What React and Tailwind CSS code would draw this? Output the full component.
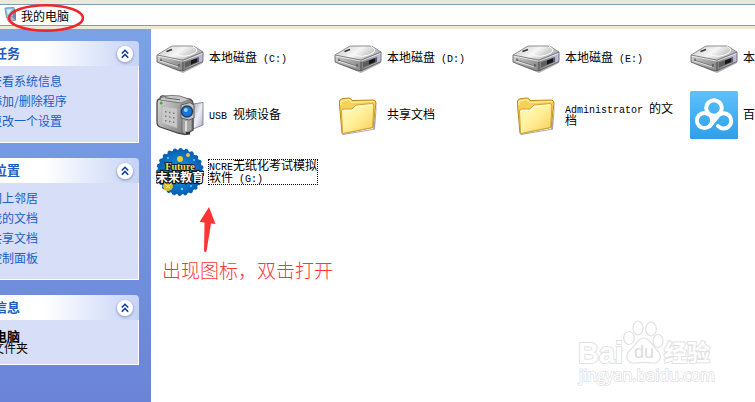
import React from "react";

const DriveIcon = () => (
    <svg className="w-12 h-12 shrink-0" viewBox="0 0 48 48" aria-hidden="true">
        <defs>
            <linearGradient id="driveTop" x1="0" y1="0" x2="1" y2="0.4">
                <stop offset="0" stopColor="#c4c4c4" />
                <stop offset="0.55" stopColor="#f6f6f6" />
                <stop offset="1" stopColor="#b0b0b0" />
            </linearGradient>
            <linearGradient id="driveFront" x1="0" y1="0" x2="1" y2="0.5">
                <stop offset="0" stopColor="#cfcfcf" />
                <stop offset="1" stopColor="#8e8e8e" />
            </linearGradient>
            <linearGradient id="driveSide" x1="0" y1="0" x2="1" y2="0">
                <stop offset="0" stopColor="#7c7c7c" />
                <stop offset="1" stopColor="#c0c0e2" />
            </linearGradient>
        </defs>
        <path d="M2 29 L27 39 L47 29 V27 L27 35 Z" fill="#000" opacity="0.3" />
        <path d="M1 21 L27 26 V36.8 L23 36.5 L1 28 Z" fill="url(#driveFront)" stroke="#555" strokeWidth="0.8" />
        <path d="M27 26 L47 18 V27.5 L27 36.8 Z" fill="url(#driveSide)" stroke="#555" strokeWidth="0.8" />
        <path d="M1 21 L15 12.5 Q16 12 18 12 H36 Q38 12 40 13.5 L47 18 L27 26 Z" fill="url(#driveTop)" stroke="#777" strokeWidth="0.8" />
        <path d="M1.5 22 L27 27.2 L46.5 19.5" fill="none" stroke="#f2f2f2" strokeWidth="0.8" />
        <path d="M19 20 Q28 25 39 19 Q43 15 37 12.5" fill="none" stroke="#fff" strokeWidth="1" />
        <path d="M10.5 17.5 l5.5 -2" stroke="#333" strokeWidth="1.4" />
        <path d="M4 26 L24 32.5" stroke="#777" strokeWidth="1" />
        <path d="M4 27 L24 33.5" stroke="#eee" strokeWidth="0.8" />
        <path d="M5 24.5 v2.5 M23 30 v3.5" stroke="#444" strokeWidth="1" />
        <path d="M29 28.5 L43 23 V28 L29 33.5 Z" fill="#5c5c5c" />
        <path d="M35 26.5 L41 24.2 V28 L35 30.5 Z" fill="#171717" />
    </svg>
);

const CameraIcon = () => (
    <svg className="w-12 h-12 shrink-0" viewBox="0 0 48 48" aria-hidden="true">
        <defs>
            <linearGradient id="camBody" x1="0" y1="0" x2="1" y2="0.5">
                <stop offset="0" stopColor="#dadada" />
                <stop offset="1" stopColor="#7d7d7d" />
            </linearGradient>
            <linearGradient id="camScreen" x1="0" y1="0" x2="1" y2="1">
                <stop offset="0" stopColor="#a5a5a5" />
                <stop offset="0.5" stopColor="#efeffa" />
                <stop offset="1" stopColor="#a9a9d0" />
            </linearGradient>
        </defs>
        <path d="M37 13 L47 11.5 V34 L37 38 Z" fill="url(#camScreen)" stroke="#777" strokeWidth="0.8" />
        <path d="M4 8 Q4 4 8 5 L33 8 Q37 9 37 13 V39 L29 43.5 L22 42 L4 36 Q1 35 1 31 V12 Q1 8 4 8 Z" fill="url(#camBody)" stroke="#4a4a4a" strokeWidth="1.3" />
        <path d="M5 6.5 Q14 3 24 5 L34 8.5 L25 12 L4 9 Z" fill="#c8c8c8" stroke="#666" strokeWidth="0.8" />
        <path d="M9 6.8 L24 8.8" stroke="#555" strokeWidth="0.9" />
        <path d="M6 15 L21 17.5 V37 L6 32 Z" fill="#c9c9c9" stroke="#b5b5b5" strokeWidth="0.7" />
        <path d="M9 20h1.5v1.5H9zM13 20.7h1.5v1.5H13zM17 21.4h1.5v1.5H17zM9 24.5h1.5V26H9zM13 25.2h1.5v1.5H13zM17 26h1.5v1.5H17zM9 29h1.5v1.5H9zM13 29.8h1.5v1.5H13zM17 30.6h1.5v1.5H17z" fill="#7d7d7d" />
        <path d="M26 27 H36 V39 L29 43 L26 41 Z" fill="#a5a5a5" stroke="#666" strokeWidth="0.8" />
        <path d="M30 30 V40" stroke="#eee" strokeWidth="1.5" />
        <path d="M25 14 L34 11.5 L38 14 V27 L33 29 L25 27 Z" fill="#c5c5c5" stroke="#555" strokeWidth="0.9" />
        <circle cx="31" cy="20.5" r="6.2" fill="#263a5c" />
        <circle cx="31" cy="20.5" r="4.8" fill="#1676e0" />
        <circle cx="29.8" cy="19" r="2" fill="#8fd0ff" />
        <circle cx="5.2" cy="12" r="1.5" fill="#3fae36" />
        <path d="M30 41h4v2.5l-4 .5z" fill="#333" />
    </svg>
);

const FolderIcon = () => (
    <svg className="w-12 h-12 shrink-0" viewBox="0 0 48 48" aria-hidden="true">
        <defs>
            <linearGradient id="folderFront" x1="0" y1="0" x2="1" y2="1">
                <stop offset="0" stopColor="#fffbc0" />
                <stop offset="0.5" stopColor="#ffef98" />
                <stop offset="1" stopColor="#f8cd50" />
            </linearGradient>
        </defs>
        <path d="M8 43 L39 38 L43 12 L41 38.5 L9 44 Z" fill="#000" opacity="0.35" />
        <path d="M5.5 14 V10 Q6 8 9 7.5 L15 7 Q17 7 18 9.5 L39 9 Q42 9 42 12 L39 36.5 L8 42.5 Z" fill="#f8cf58" stroke="#bd8b1c" strokeWidth="1" />
        <path d="M7 14 V10.5 L15 8.5 L17.5 11.5 L40 10.5" fill="none" stroke="#fff0a4" strokeWidth="1.2" />
        <path d="M7.5 20 Q7.5 18 10 18 H18 L22 14 L38 12.5 Q40 12.5 39.8 15 L38.7 36.5 L8.5 42.5 Z" fill="url(#folderFront)" stroke="#d3a238" strokeWidth="1" />
        <path d="M9 21 Q9 19.5 11 19.5 H19 L23 15.5 L38 14" fill="none" stroke="#fffde0" strokeWidth="1" />
    </svg>
);

const CloudDiskIcon = () => (
    <svg className="w-12 h-12 shrink-0" viewBox="0 0 48 48" aria-hidden="true">
        <defs>
            <linearGradient id="cloudBg" x1="0" y1="0" x2="0" y2="1">
                <stop offset="0" stopColor="#5fc0fb" />
                <stop offset="1" stopColor="#2f9fe9" />
            </linearGradient>
        </defs>
        <rect width="48" height="48" rx="1.5" fill="url(#cloudBg)" />
        <g fill="none" stroke="#fff" strokeWidth="4" strokeLinecap="round">
            <circle cx="24" cy="17" r="7.8" />
            <circle cx="14.5" cy="29.5" r="7.6" />
            <path d="M20 34.8 L28.4 24.4 A7.6 7.6 0 1 1 28 35" />
        </g>
    </svg>
);

const FutureIcon = () => (
    <svg className="w-12 h-12 shrink-0" viewBox="0 0 48 48" aria-hidden="true">
        <defs>
            <radialGradient id="badgeBg">
                <stop offset="0" stopColor="#159de8" />
                <stop offset="1" stopColor="#0a61b5" />
            </radialGradient>
        </defs>
        <circle cx="24" cy="24" r="22.5" fill="url(#badgeBg)" />
        <circle cx="24" cy="24" r="22" fill="none" stroke="#0b62b4" strokeWidth="4" strokeDasharray="0.1 5.66" strokeLinecap="round" />
        <circle cx="32" cy="7" r="2" fill="#e2c83b" />
        <circle cx="24" cy="11" r="3" fill="#e9cf35" />
        <circle cx="12" cy="38" r="5" fill="#d7bd2b" />
        <path d="M9 36l5 4M10 40l5-4" stroke="#f8eb86" strokeWidth="1" />
        <g fill="#68c9ff">
            <circle cx="12" cy="10" r="1" />
            <circle cx="38" cy="12" r="1" />
            <circle cx="26" cy="41" r="1.2" />
            <circle cx="35" cy="38" r="1" />
        </g>
        <text x="24" y="22" textAnchor="middle" fontFamily="Liberation Serif, serif" fontSize="10" fontWeight="700" fill="#f7e136" stroke="#10233d" strokeWidth="2" paintOrder="stroke">Future</text>
        <text x="24" y="34" textAnchor="middle" fontFamily="Noto Sans CJK SC, sans-serif" fontSize="12" fontWeight="700" fill="#fff" stroke="#111" strokeWidth="2.2" paintOrder="stroke">未来教育</text>
    </svg>
);

const ComputerIcon = () => (
    <svg className="w-4 h-4 shrink-0" viewBox="0 0 16 16" aria-hidden="true">
        <path d="M1 1 L10 0.5 L11 9 L2.5 11 Z" fill="#7fc5ee" stroke="#8795b4" strokeWidth="1" />
        <path d="M2.5 2.5 L8 2 L4 8 Z" fill="#d3f0ff" />
        <path d="M10 2 L12 3 V13 L9 14 V9 Z" fill="#7184ba" />
        <path d="M3 12 L9 10.5 L12 13 L5 15 Z" fill="#b8bdd2" stroke="#7a80a0" strokeWidth="0.7" />
    </svg>
);

const Panel = ({ title, children }) => (
    <section className="-ml-12 mr-3">
        <div className="h-[25px] pl-4 pr-1.5 flex items-center justify-between rounded-tr-sm bg-linear-to-r from-white from-50% to-[#c6d3f7]">
            <h2 className="text-[13px] leading-3 pb-0.5 font-bold text-[#215dc6]">{title}</h2>
            <button type="button" aria-label={title} className="w-4 h-4 flex items-center justify-center rounded-full bg-white shadow-[0_1px_2px_1px_#a4afcf]">
                <svg className="w-4 h-4" viewBox="0 0 16 16" fill="none" stroke="#0f3c9c" strokeWidth="1.6">
                    <path d="M4.8 7.5 L8 4.3 L11.2 7.5 M4.8 11.7 L8 8.5 L11.2 11.7" />
                </svg>
            </button>
        </div>
        <div className="bg-[#d6dff7] border-r border-b border-white">{children}</div>
    </section>
);

const LinkList = ({ items }) => (
    <ul className="pt-[5px] pb-[11px] pl-[38px]">
        {items.map((item) => (
            <li key={item} className="h-5 flex items-center">
                <a href="#" className="text-[#215dc6] hover:underline">{item}</a>
            </li>
        ))}
    </ul>
);

// Half-width letters sit on a 6px cell, half of a Chinese character
const Latin = ({ children }) => (
    <span className="font-['Liberation_Mono',monospace] text-[10px] leading-1 whitespace-pre-wrap">{children}</span>
);

const items = [
    { id: "c", icon: DriveIcon, label: <>本地磁盘<Latin>{" (C:)"}</Latin></> },
    { id: "d", icon: DriveIcon, label: <>本地磁盘<Latin>{" (D:)"}</Latin></> },
    { id: "e", icon: DriveIcon, label: <>本地磁盘<Latin>{" (E:)"}</Latin></> },
    { id: "f", icon: DriveIcon, label: <>本地磁盘<Latin>{" (F:)"}</Latin></> },
    { id: "usb", icon: CameraIcon, label: <><Latin>{"USB "}</Latin>视频设备</> },
    { id: "shared", icon: FolderIcon, label: "共享文档" },
    { id: "admin", icon: FolderIcon, label: <><Latin>{"Administrator "}</Latin>的文档</> },
    { id: "pan", icon: CloudDiskIcon, label: "百度网盘" },
    { id: "g", icon: FutureIcon, label: <><Latin>NCRE</Latin>无纸化考试模拟软件<Latin>{" (G:)"}</Latin></>, focused: true },
];

const Item = ({ icon: Icon, label, focused }) => (
    <button type="button" className="h-12 flex items-center gap-1 text-left">
        <Icon />
        <span className={`w-[110px] pl-px pb-0.5 block leading-3 ${focused ? "outline-1 -outline-offset-1 outline-dotted outline-black" : ""}`}>
            {label}
        </span>
    </button>
);

const Watermark = () => (
    <svg className="absolute right-10 bottom-3 w-[140px] h-[72px]" viewBox="0 0 140 72" fill="#fff" stroke="#e2e2e2" strokeWidth="1.2">
        <g fontFamily="Liberation Sans, sans-serif" fontWeight="700" paintOrder="stroke" strokeWidth="2">
            <text x="3" y="45" fontSize="29">Bai</text>
            <text x="89" y="43" fontSize="23" fontFamily="Noto Sans CJK SC, sans-serif">经验</text>
        </g>
        <ellipse cx="54" cy="20" rx="5.3" ry="6.5" />
        <ellipse cx="63" cy="10" rx="5" ry="7" />
        <ellipse cx="76" cy="11" rx="5.3" ry="7" />
        <ellipse cx="83" cy="23" rx="5" ry="6.5" />
        <path d="M69 20 C75 20 77 28 82 32 C88 38 85 46 78 45 C72 44 67 44 61 45 C52 46 49 38 55 32 C61 28 62 20 69 20 Z" />
        <text x="69" y="40" textAnchor="middle" fontFamily="Liberation Sans, sans-serif" fontSize="18" fill="#dcdcdc" stroke="none">du</text>
        <text x="4" y="63" fontFamily="Open Sans, sans-serif" fontSize="16" paintOrder="stroke" strokeWidth="1.6">jingyan.baidu.com</text>
    </svg>
);

export default function App() {
    return (
        <div className="relative min-h-screen flex flex-col overflow-hidden bg-white text-xs leading-3 text-black font-['Noto_Sans_CJK_SC',sans-serif]">
            <header className="relative bg-[#ece9d8] pt-1 pb-[3px]">
                <div className="h-[22px] pl-1 flex items-center gap-px bg-white border-y border-[#7f9db9]">
                    <ComputerIcon />
                    <input aria-label="地址" defaultValue="我的电脑" className="flex-1 min-w-0 h-5 bg-transparent outline-none" />
                </div>
                <svg className="absolute left-[6px] top-[3px] w-20 h-[30px] z-10 pointer-events-none" viewBox="0 0 80 30" aria-hidden="true">
                    <ellipse cx="40" cy="15" rx="37" ry="12.8" fill="none" stroke="#f1262b" strokeWidth="2.6" />
                </svg>
            </header>

            <div className="flex-1 flex">
                <aside className="w-[151px] shrink-0 pt-3 flex flex-col gap-[15px] overflow-hidden bg-linear-to-b from-[#7ba2e7] to-[#6b84d9]">
                    <Panel title="系统任务">
                        <LinkList items={["查看系统信息", "添加/删除程序", "更改一个设置"]} />
                    </Panel>
                    <Panel title="其它位置">
                        <LinkList items={["网上邻居", "我的文档", "共享文档", "控制面板"]} />
                    </Panel>
                    <Panel title="详细信息">
                        <div className="py-2.5 pl-4">
                            <p className="text-[13px] leading-3 font-bold">我的电脑</p>
                            <p>系统文件夹</p>
                        </div>
                    </Panel>
                </aside>

                <main className="flex-1 min-w-0 overflow-hidden pt-[5px] pl-[5px]">
                    <div className="grid grid-cols-[repeat(4,178px)] gap-y-[9px]">
                        {items.map((item) => (
                            <Item key={item.id} icon={item.icon} label={item.label} focused={item.focused} />
                        ))}
                    </div>
                    <div className="pt-2.5 pl-1.5 text-[#ff3535]">
                        <svg className="ml-9 w-5 h-12" viewBox="0 0 20 48" aria-hidden="true">
                            <path d="M11 1 L17.5 18 L13 17.5 L8.5 45.5 Q7 46.5 6 45 L6.5 16.5 L1.5 16 Z" fill="currentColor" />
                        </svg>
                        <p className="pt-1 text-[19px] leading-6 font-light">出现图标，双击打开</p>
                    </div>
                </main>
            </div>

            <Watermark />
        </div>
    );
}
